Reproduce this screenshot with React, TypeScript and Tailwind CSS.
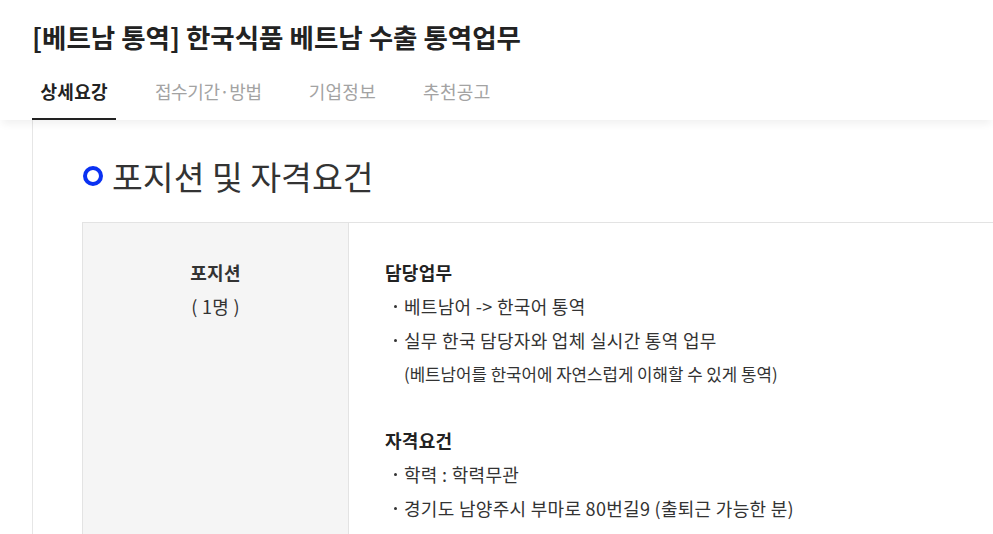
const TABS = ['상세요강', '접수기간·방법', '기업정보', '추천공고'];

function Bullet({ children, small }: { children: React.ReactNode; small?: boolean }) {
  return (
    <div className="flex items-center h-[34px] pl-[1px]">
      <span className="w-[18px] flex justify-center">
        {!small && <span className="block w-[3px] h-[3px] rounded-full bg-[#333]" />}
      </span>
      <span className={small ? 'text-[16.8px] tracking-[0px]' : 'text-[18px] tracking-[0.3px]'}>{children}</span>
    </div>
  );
}

export default function App() {
  return (
    <div
      className="w-[993px] h-[534px] overflow-hidden bg-white text-[#333]"
      style={{ fontFamily: '"Noto Sans CJK KR", "Noto Sans", sans-serif' }}
    >
      {/* Header + tabs */}
      <div className="relative z-10 bg-white shadow-[0_6px_8px_-2px_rgba(0,0,0,0.06)]">
        <div className="pl-[32px] pt-[19px]">
          <h1 className="text-[26.5px] leading-[36px] font-bold text-[#222] tracking-[0px]">
            [베트남 통역] 한국식품 베트남 수출 통역업무
          </h1>
          <nav className="flex gap-[30px] mt-[9px] h-[56px]">
            {TABS.map((t, i) => (
              <div
                key={t}
                className={
                  i === 0
                    ? 'flex items-center px-[8.5px] text-[18px] tracking-[0.3px] font-bold text-[#222] border-b-2 border-[#222]'
                    : i === 1
                      ? 'flex items-center px-[8.5px] text-[18px] tracking-[-0.4px] text-[#a3a3a3] border-b-2 border-transparent'
                      : 'flex items-center px-[8.5px] text-[18px] tracking-[0.3px] text-[#a3a3a3] border-b-2 border-transparent'
                }
              >
                {t}
              </div>
            ))}
          </nav>
        </div>
      </div>

      {/* Content */}
      <div className="pl-[32px]">
        <div className="border-l border-[#e6e6e6] h-[420px] pl-[49px] pt-[36px]">
          <h2 className="flex items-center h-[40px] gap-[9px] text-[33.5px] text-[#333]">
            <span className="block w-[20px] h-[20px] ml-[1px] rounded-full border-[4px] border-[#0a31f2]" />
            포지션 및 자격요건
          </h2>

          <div className="mt-[26px] flex border-t border-l border-[#e3e3e3] h-[400px]">
            <div className="w-[266px] shrink-0 bg-[#f5f5f5] border-r border-[#e3e3e3] pt-[32px] text-center text-[18px] tracking-[0.3px] leading-[34px]">
              <div className="font-bold text-[#333]">포지션</div>
              <div>( 1명 )</div>
            </div>
            <div className="flex-1 pl-[36px] pt-[32px] text-[18px] tracking-[0.3px] leading-[34px]">
              <div className="font-bold text-[#222]">담당업무</div>
              <Bullet>베트남어 -&gt; 한국어 통역</Bullet>
              <Bullet>실무 한국 담당자와 업체 실시간 통역 업무</Bullet>
              <Bullet small>(베트남어를 한국어에 자연스럽게 이해할 수 있게 통역)</Bullet>

              <div className="font-bold text-[#222] mt-[32px]">자격요건</div>
              <Bullet>학력 : 학력무관</Bullet>
              <Bullet>경기도 남양주시 부마로 80번길9 (출퇴근 가능한 분)</Bullet>
            </div>
          </div>
        </div>
      </div>
    </div>
  );
}
